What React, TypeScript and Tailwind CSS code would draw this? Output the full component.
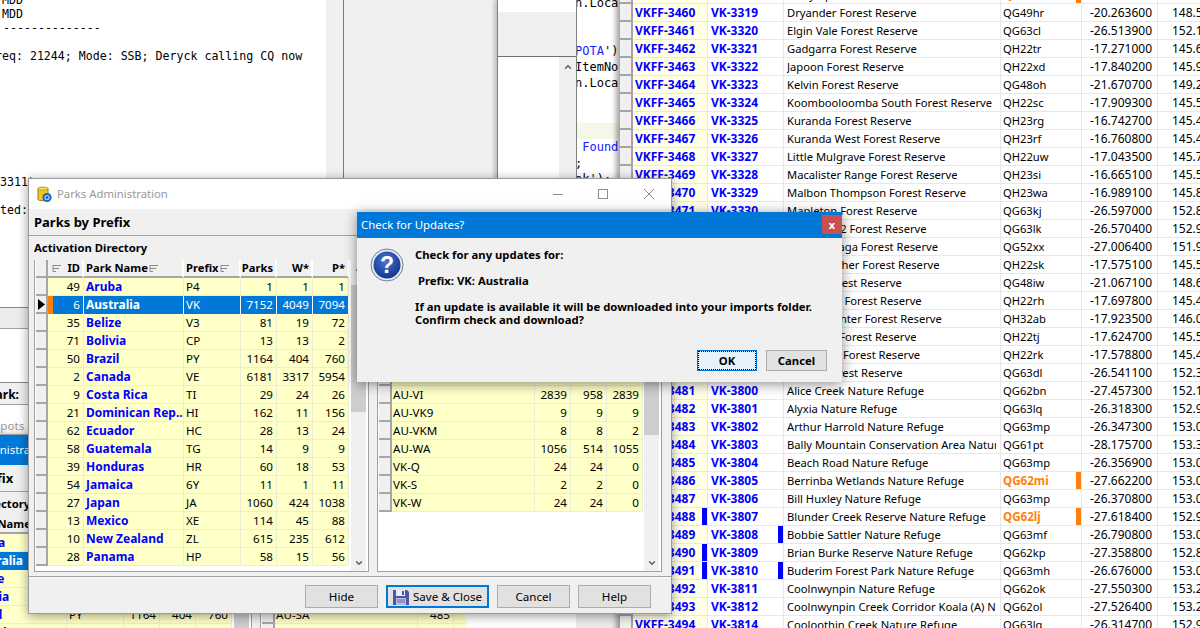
import React from 'react';
import { ChevronDown, ChevronUp } from 'lucide-react';

type ParkRow = [string, string, string, string, string, string];

const PARKS: ParkRow[] = [
  ['49', 'Aruba', 'P4', '1', '1', '1'],
  ['6', 'Australia', 'VK', '7152', '4049', '7094'],
  ['35', 'Belize', 'V3', '81', '19', '72'],
  ['71', 'Bolivia', 'CP', '13', '13', '2'],
  ['50', 'Brazil', 'PY', '1164', '404', '760'],
  ['2', 'Canada', 'VE', '6181', '3317', '5954'],
  ['9', 'Costa Rica', 'TI', '29', '24', '26'],
  ['21', 'Dominican Rep...', 'HI', '162', '11', '156'],
  ['62', 'Ecuador', 'HC', '28', '13', '24'],
  ['58', 'Guatemala', 'TG', '14', '9', '9'],
  ['39', 'Honduras', 'HR', '60', '18', '53'],
  ['54', 'Jamaica', '6Y', '11', '1', '11'],
  ['27', 'Japan', 'JA', '1060', '424', '1038'],
  ['13', 'Mexico', 'XE', '114', '45', '88'],
  ['10', 'New Zealand', 'ZL', '615', '235', '612'],
  ['28', 'Panama', 'HP', '58', '15', '56'],
];

const REGIONS: [string, string, string, string][] = [
  ['AU-ACT', '67', '31', '67'],
  ['AU-NSW', '1212', '702', '1180'],
  ['AU-NT', '94', '60', '94'],
  ['AU-QLD', '1030', '611', '1030'],
  ['AU-SA', '485', '302', '485'],
  ['AU-TA', '385', '215', '385'],
  ['AU-VI', '2839', '958', '2839'],
  ['AU-VK9', '9', '9', '9'],
  ['AU-VKM', '8', '8', '2'],
  ['AU-WA', '1056', '514', '1055'],
  ['VK-Q', '24', '24', '0'],
  ['VK-S', '2', '2', '0'],
  ['VK-W', '24', '24', '0'],
];

// code, wwff, name, grid, lat, lon, flags
type Ref = { a: string; b: string; n: string; g: string; lat: string; lon: string; hot?: boolean; bar1?: boolean; bar2?: boolean };
const r = (a: string, b: string, n: string, g: string, lat: string, lon: string, f: Partial<Ref> = {}): Ref => ({ a, b, n, g, lat, lon, ...f });

const REFS: Ref[] = [
  r('3459', '3318', 'Dalrymple Forest Reserve', 'QH22aa', '-17.950100', '145.2', { hot: true }),
  r('3460', '3319', 'Dryander Forest Reserve', 'QG49hr', '-20.263600', '148.5'),
  r('3461', '3320', 'Elgin Vale Forest Reserve', 'QG63cl', '-26.513900', '152.1'),
  r('3462', '3321', 'Gadgarra Forest Reserve', 'QH22tr', '-17.271000', '145.6'),
  r('3463', '3322', 'Japoon Forest Reserve', 'QH22xd', '-17.840200', '145.9'),
  r('3464', '3323', 'Kelvin Forest Reserve', 'QG48oh', '-21.670700', '149.2'),
  r('3465', '3324', 'Koombooloomba South Forest Reserve', 'QH22sc', '-17.909300', '145.5'),
  r('3466', '3325', 'Kuranda Forest Reserve', 'QH23rg', '-16.742700', '145.4'),
  r('3467', '3326', 'Kuranda West Forest Reserve', 'QH23rf', '-16.760800', '145.4'),
  r('3468', '3327', 'Little Mulgrave Forest Reserve', 'QH22uw', '-17.043500', '145.7'),
  r('3469', '3328', 'Macalister Range Forest Reserve', 'QH23si', '-16.665100', '145.5'),
  r('3470', '3329', 'Malbon Thompson Forest Reserve', 'QH23wa', '-16.989100', '145.8'),
  r('3471', '3330', 'Mapleton Forest Reserve', 'QG63kj', '-26.597000', '152.8'),
  r('3472', '3331', 'Mapleton 2 Forest Reserve', 'QG63lk', '-26.570400', '152.9'),
  r('3473', '3332', 'Mundubbaga Forest Reserve', 'QG52xx', '-27.006400', '151.9'),
  r('3474', '3333', 'Mount Archer Forest Reserve', 'QH22sk', '-17.575100', '145.5'),
  r('3475', '3334', 'Mount Forest Reserve', 'QG48iw', '-21.067100', '148.6'),
  r('3476', '3335', 'Daintree 1 Forest Reserve', 'QH22rh', '-17.697800', '145.4'),
  r('3477', '3336', 'Mount Hunter Forest Reserve', 'QH32ab', '-17.923500', '146.0'),
  r('3478', '3337', 'Tumoulin Forest Reserve', 'QH22tj', '-17.624700', '145.5'),
  r('3479', '3338', 'Wongabel Forest Reserve', 'QH22rk', '-17.578800', '145.4'),
  r('3480', '3339', 'Tinana Forest Reserve', 'QG63dl', '-26.541100', '152.3'),
  r('3481', '3800', 'Alice Creek Nature Refuge', 'QG62bn', '-27.457300', '152.1'),
  r('3482', '3801', 'Alyxia Nature Refuge', 'QG63lq', '-26.318300', '152.9'),
  r('3483', '3802', 'Arthur Harrold Nature Refuge', 'QG63mp', '-26.347300', '153.0'),
  r('3484', '3803', 'Bally Mountain Conservation Area Nature Refuge', 'QG61pt', '-28.175700', '153.3'),
  r('3485', '3804', 'Beach Road Nature Refuge', 'QG63mp', '-26.356900', '153.0'),
  r('3486', '3805', 'Berrinba Wetlands Nature Refuge', 'QG62mi', '-27.662200', '153.0', { hot: true }),
  r('3487', '3806', 'Bill Huxley Nature Refuge', 'QG63mp', '-26.370800', '153.0'),
  r('3488', '3807', 'Blunder Creek Reserve Nature Refuge', 'QG62lj', '-27.618400', '152.9', { hot: true, bar1: true }),
  r('3489', '3808', 'Bobbie Sattler Nature Refuge', 'QG63mf', '-26.790800', '153.0', { bar2: true }),
  r('3490', '3809', 'Brian Burke Reserve Nature Refuge', 'QG62kp', '-27.358800', '152.8', { bar1: true }),
  r('3491', '3810', 'Buderim Forest Park Nature Refuge', 'QG63mh', '-26.676000', '153.0', { bar1: true, bar2: true }),
  r('3492', '3811', 'Coolnwynpin Nature Refuge', 'QG62ok', '-27.550300', '153.2'),
  r('3493', '3812', 'Coolnwynpin Creek Corridor Koala (A) Nature Refuge', 'QG62ol', '-27.526400', '153.2'),
  r('3494', '3814', 'Cooloothin Creek Nature Refuge', 'QG63lq', '-26.314700', '152.9'),
];

const FilterIcon = () => (
  <svg width="10" height="8" viewBox="0 0 10 8" className="shrink-0" fill="none" stroke="#8a8a8a">
    <path d="M1 1.5h8M1 4.5h6M1 7.5h3" />
    <path d="M1 1v6.5" />
  </svg>
);

const RowHead = ({ arrow = false, w = 'w-[12px]' }: { arrow?: boolean; w?: string }) => (
  <div className={`${w} h-full shrink-0 bg-[#f0f0f0] border-r-2 border-b-2 border-[#a5a5a5] flex items-center justify-center`}>
    {arrow && (
      <svg width="7" height="11" viewBox="0 0 7 11">
        <path d="M0 0l7 5.5L0 11z" fill="#000" />
      </svg>
    )}
  </div>
);

const ScrollBar = ({ top, h }: { top: string; h: string }) => (
  <div className="w-[15px] shrink-0 ml-auto mr-[2px] bg-[#f0f0f0] flex flex-col items-center">
    <div className="h-[17px] flex items-center shrink-0">
      <ChevronUp size={10} strokeWidth={3.5} color="#606060" />
    </div>
    <div className={`${top} ${h} w-full bg-[#cdcdcd] shrink-0`} />
    <div className="mt-auto h-[17px] flex items-center shrink-0">
      <ChevronDown size={10} strokeWidth={3.5} color="#606060" />
    </div>
  </div>
);

const HeadCell = ({ children, className }: { children?: React.ReactNode; className: string }) => (
  <div className={`h-full shrink-0 flex items-center font-bold text-[11.2px] border-r-2 border-b-2 border-r-white border-b-[#a5a5a5] ${className}`}>{children}</div>
);

const ParksGrid = () => (
  <div className="flex flex-col w-[313px] shrink-0 ml-px">
    <div className="flex h-[18px] bg-[#f0f0f0] shrink-0">
      <HeadCell className="w-[12px] !border-r-[#a5a5a5]" />
      <HeadCell className="w-[36px] pl-[4px] pr-[2px] justify-between">
        <FilterIcon />
        <span>ID</span>
      </HeadCell>
      <HeadCell className="w-[100px] pl-[2px] gap-px">
        <span>Park Name</span>
        <FilterIcon />
      </HeadCell>
      <HeadCell className="w-[57px] pl-[2px] gap-px">
        <span>Prefix</span>
        <FilterIcon />
      </HeadCell>
      <HeadCell className="w-[36px] justify-end pr-[2px]">Parks</HeadCell>
      <HeadCell className="w-[36px] justify-end pr-[2px]">W*</HeadCell>
      <HeadCell className="w-[36px] justify-end pr-[2px]">P*</HeadCell>
    </div>
    {PARKS.map((p, i) => {
      const sel = i === 1;
      return (
        <div key={p[0]} className={`flex h-[18px] shrink-0 ${sel ? 'bg-[#0078d7] text-white' : 'bg-[#ffffc8] text-black'}`}>
          <RowHead arrow={sel} />
          <div className={`w-[36px] flex items-center border-r ${sel ? 'border-white' : 'border-[#ececd8] border-b'}`}>
            {sel && <div className="w-[5px] h-full bg-[#ff7f0e] shrink-0" />}
            <span className="ml-auto pr-[3px]">{p[0]}</span>
          </div>
          <div className={`w-[100px] flex items-center pl-[2px] font-bold text-[12px] whitespace-nowrap overflow-hidden border-r ${sel ? 'border-white text-white' : 'border-[#ececd8] border-b text-[#0000ff]'}`}>{p[1]}</div>
          <div className={`w-[57px] flex items-center pl-[2px] border-r ${sel ? 'border-white' : 'border-[#ececd8] border-b'}`}>{p[2]}</div>
          {[p[3], p[4], p[5]].map((v, j) => (
            <div key={j} className={`w-[36px] flex items-center justify-end pr-[3px] border-r ${sel ? 'border-white' : 'border-[#ececd8] border-b'}`}>{v}</div>
          ))}
        </div>
      );
    })}
  </div>
);

const RegionGrid = () => (
  <div className="flex flex-col w-[264px] shrink-0 ml-px">
    <div className="flex h-[18px] bg-[#f0f0f0] shrink-0">
      <HeadCell className="w-[13px] !border-r-[#a5a5a5]" />
      <HeadCell className="w-[143px] pl-[2px] gap-px">
        <span>Region</span>
        <FilterIcon />
      </HeadCell>
      <HeadCell className="w-[36px] justify-end pr-[2px]">Parks</HeadCell>
      <HeadCell className="w-[36px] justify-end pr-[2px]">W*</HeadCell>
      <HeadCell className="w-[36px] justify-end pr-[2px]">P*</HeadCell>
    </div>
    {REGIONS.map(p => (
      <div key={p[0]} className="flex h-[18px] shrink-0 bg-[#ffffc8]">
        <RowHead w="w-[13px]" />
        <div className="w-[143px] flex items-center pl-px border-r border-b border-[#ececd8]">{p[0]}</div>
        {[p[1], p[2], p[3]].map((v, j) => (
          <div key={j} className="w-[36px] flex items-center justify-end pr-[3px] border-r border-b border-[#ececd8]">{v}</div>
        ))}
      </div>
    ))}
  </div>
);

const WinButton = ({ children, focus = false }: { children: React.ReactNode; focus?: boolean }) => (
  <div
    className={`h-[23px] flex items-center justify-center gap-[4px] ${
      focus ? 'w-[103px] border-2 border-[#0078d7] bg-[#e1e1e1]' : 'w-[73px] border border-[#adadad] bg-[#e1e1e1]'
    }`}
  >
    {children}
  </div>
);

const DbIcon = () => (
  <svg width="15" height="17" viewBox="0 0 15 17">
    <path d="M1 2.5C1 1 11 1 11 2.5V13.5C11 15 1 15 1 13.5Z" fill="#f5c518" stroke="#a07c10" />
    <ellipse cx="6" cy="2.6" rx="5" ry="1.4" fill="#fde97a" stroke="#a07c10" strokeWidth="0.6" />
    <circle cx="10" cy="11.5" r="4.6" fill="#1c66c4" />
    <circle cx="10" cy="11.5" r="2.6" fill="#9ccbf2" />
    <circle cx="10" cy="11.5" r="1.2" fill="#1a4f9c" />
  </svg>
);

const FloppyIcon = () => (
  <svg width="16" height="16" viewBox="0 0 16 16">
    <path d="M0 1h14l2 2v13H0z" fill="#4a56a8" />
    <rect x="3" y="1" width="9" height="6" fill="#e9ecf6" />
    <rect x="9" y="2" width="2" height="4" fill="#4a56a8" />
    <rect x="3" y="9" width="10" height="7" fill="#b7bcdc" />
    <path d="M4 11h8M4 13h8" stroke="#6a70a8" />
  </svg>
);

const ParksWindow = ({ active, className }: { active: boolean; className: string }) => (
  <div className={`w-[644px] h-[436px] flex flex-col bg-[#f0f0f0] border border-[#9a9a9a] shadow-[0_2px_10px_rgba(0,0,0,0.4)] ${className}`}>
    <div className={`h-[30px] shrink-0 flex items-center pl-[8px] text-[11.3px] ${active ? 'bg-[#0078d7] text-white' : 'bg-white text-[#999999]'}`}>
      <DbIcon />
      <span className="ml-[5px]">Parks Administration</span>
      <div className="ml-auto flex items-center">
        <svg width="103" height="12" viewBox="0 0 103 12" fill="none" stroke="#8c8c8c" className="mr-[16px]">
          <path d="M1 6.5h10" />
          <rect x="46.5" y="1.5" width="9" height="9" />
          <path d="M92 1l10 10M102 1L92 11" />
        </svg>
      </div>
    </div>
    <div className="h-[27px] shrink-0 flex items-center pl-[5px] text-[13px] font-bold border-b border-[#a0a0a0]">Parks by Prefix</div>
    <div className="h-[24px] shrink-0 flex items-center pl-[5px] font-bold text-[11.3px]">Activation Directory</div>
    <div className="flex gap-[8px] pl-[5px] h-[312px] shrink-0 text-black">
      <div className="w-[335px] shrink-0 flex bg-white border border-t-0 border-[#a0a0a0] overflow-hidden">
        <ParksGrid />
        <ScrollBar top="mt-[8px]" h="h-[127px]" />
      </div>
      <div className="w-[285px] shrink-0 flex bg-white border border-t-0 border-[#a0a0a0] overflow-hidden">
        <RegionGrid />
        <ScrollBar top="mt-[0px]" h="h-[158px]" />
      </div>
    </div>
    <div className="mt-[4px] border-t border-b border-t-[#a0a0a0] border-b-white h-[2px] shrink-0" />
    <div className="flex justify-end gap-[8px] pt-[7px] pr-[20px] shrink-0">
      <WinButton>Hide</WinButton>
      <WinButton focus>
        <FloppyIcon />
        <span>Save &amp; Close</span>
      </WinButton>
      <WinButton>Cancel</WinButton>
      <WinButton>Help</WinButton>
    </div>
  </div>
);

const CODE: [string, string][] = [
  ['n.Loca', ''],
  ['', ''],
  ['', ''],
  ['', "POTA')"],
  ['ItemNo', ''],
  ['n.Loca', ''],
  ['', ''],
  ['', ''],
  ['', ''],
  ['', ' Found'],
  [';', ''],
  ["ok');", ''],
];

const LOG: [string, string][] = [
  ['MDD', 'ml-[2px]'],
  ['MDD', 'ml-[2px]'],
  ['--------------', 'ml-[3px]'],
  ['', ''],
  ['req: 21244; Mode: SSB; Deryck calling CQ now', '-ml-[5px]'],
  ['', ''], ['', ''], ['', ''], ['', ''], ['', ''], ['', ''], ['', ''], ['', ''],
  ['3311)', ''],
  ['', ''],
  ['ted:', ''],
];

const QuestionIcon = () => (
  <svg width="34" height="34" viewBox="0 0 34 34" className="shrink-0">
    <defs>
      <radialGradient id="qg" cx="45%" cy="35%" r="70%">
        <stop offset="0" stopColor="#4a78d0" />
        <stop offset="1" stopColor="#0c2f8c" />
      </radialGradient>
    </defs>
    <circle cx="17" cy="17" r="16" fill="#e8ecf2" stroke="#6f7d95" />
    <circle cx="17" cy="17" r="13.5" fill="url(#qg)" />
    <text x="17" y="25" textAnchor="middle" fontSize="23" fontWeight="700" fill="#ffffff" fontFamily="Liberation Sans, sans-serif">?</text>
  </svg>
);

export default function App() {
  return (
    <div className="relative w-[1200px] h-[628px] overflow-hidden bg-[#f0f0f0] text-[11.6px] leading-none text-black font-['Noto_Sans',sans-serif]">
      {/* log window */}
      <div className="absolute left-0 top-0 w-[498px] h-[308px] flex bg-[#f0f0f0]">
        <div className="w-[326px] shrink-0 bg-white overflow-hidden font-['DejaVu_Sans_Mono',monospace] text-[11.6px] leading-[14px] whitespace-pre -mt-[7px] h-[315px]">
          {LOG.map((l, i) => (
            <div key={i} className={`h-[14px] ${l[1]}`}>
              {l[0]}
            </div>
          ))}
        </div>
        <div className="w-[17px] shrink-0" />
        <div className="w-px bg-[#7a7a7a] shrink-0" />
      </div>
      <div className="absolute left-0 top-[307px] w-[60px] flex flex-col overflow-hidden">
        <div className="h-px bg-[#8a8a8a]" />
        <div className="h-[20px] bg-[#ececec]" />
        <div className="h-px bg-[#a0a0a0]" />
        <div className="h-[53px] bg-white" />
        <div className="h-px bg-[#8a8a8a]" />
        <div className="h-[21px] bg-[#f0f0f0] font-bold text-[12px] pt-[3px] flex items-center">
          <div className="w-[19px] flex justify-end whitespace-nowrap">Bookmark:</div>
        </div>
        <div className="h-px bg-[#a0a0a0]" />
        <div className="h-[29px] bg-white flex items-end pb-[2px] text-[#999999] whitespace-nowrap">
          <span className="-ml-[6px]">Spots</span>
        </div>
      </div>

      {/* middle pane */}
      <div className="absolute left-[497px] top-0 w-[80px] h-[200px] bg-white border-x border-[#808080] shadow-[-3px_0_4px_rgba(0,0,0,0.2)] flex flex-col">
        <div className="h-[12px] shrink-0" />
        <div className="h-[45px] shrink-0 bg-[#efefef] border-b border-[#707070]" />
        <div className="flex-1 flex justify-end">
          <div className="w-[17px] bg-[#f0f0f0] flex justify-center pt-[5px]">
            <ChevronUp size={10} strokeWidth={3.5} color="#606060" />
          </div>
        </div>
      </div>

      {/* code window */}
      <div className="absolute left-[577px] -top-[5px] w-[43px] h-[240px] bg-white overflow-hidden font-['DejaVu_Sans_Mono',monospace] text-[12px] leading-[16px] whitespace-pre">
        {CODE.map((c, i) => (
          <div key={i} className={`h-[16px] -ml-[2px] ${i === 8 ? 'bg-[#f5f7e8]' : ''}`}>
            {c[0]}
            {c[1] === "POTA')" ? (
              <>
                <span className="text-[#1a1aff]">POTA</span>')
              </>
            ) : (
              <span className="text-[#1a1aff]">{c[1]}</span>
            )}
          </div>
        ))}
      </div>

      {/* window behind the parks dialog */}
      <ParksWindow active className="absolute -left-[89px] top-[434px]" />
      <div className="absolute left-[466px] top-[606px] w-[110px] h-[22px] bg-white" />
      <div className="absolute left-[576px] top-[606px] w-[44px] h-[22px] bg-[#ececec]" />

      {/* reference list */}
      <div className="absolute left-[620px] -top-[14px] w-[580px] bg-white shadow-[-4px_0_5px_rgba(0,0,0,0.35)]">
        {REFS.map(x => (
          <div key={x.a} className="flex h-[18px] whitespace-nowrap">
            <RowHead w="w-[13px]" />
            <div className="w-[75px] shrink-0 flex items-center pl-[2px] font-bold text-[12px] text-[#0000ff] bg-[#ffffe6] border-r border-b border-[#e8e8e8]">
              <span>VKFF-{x.a}</span>
              {x.bar1 && <div className="ml-auto w-[5px] h-full bg-[#0000ff]" />}
            </div>
            <div className="w-[76px] shrink-0 flex items-center pl-[3px] font-bold text-[12px] text-[#0000ff] border-r border-b border-[#e8e8e8]">
              <span>VK-{x.b}</span>
              {x.bar2 && <div className="ml-auto w-[5px] h-full bg-[#0000ff]" />}
            </div>
            <div className="w-[217px] shrink-0 flex items-center pl-[3px] pr-[4px] text-[11.2px] border-r border-b border-[#e8e8e8]">
              <span className="block overflow-hidden leading-[16px]">{x.n}</span>
            </div>
            <div className={`w-[81px] shrink-0 flex items-center pl-[2px] border-r border-b border-[#e8e8e8] ${x.hot ? 'font-bold text-[#ff7f0e]' : 'text-[11.2px]'}`}>
              <span>{x.g}</span>
              {x.hot && <div className="ml-auto w-[5px] h-full bg-[#ff7f0e]" />}
            </div>
            <div className="w-[76px] shrink-0 flex items-center justify-end pr-[5px] text-[12px] border-r border-b border-[#e8e8e8]">{x.lat}</div>
            <div className="flex-1 flex items-center pl-[14px] text-[12px] border-b border-[#e8e8e8]">{x.lon}</div>
          </div>
        ))}
      </div>

      <ParksWindow active={false} className="absolute left-[28px] top-[178px]" />

      {/* update prompt */}
      <div className="absolute left-[357px] top-[212px] w-[485px] h-[170px] flex flex-col bg-[#f0f0f0] shadow-[0_2px_12px_rgba(0,0,0,0.45)]">
        <div className="h-[26px] shrink-0 bg-[#0078d7] flex items-center pl-[4px] text-white text-[11.4px]">
          Check for Updates?
          <div className="ml-auto mb-[1px] w-[20px] h-[19px] bg-[#c75050] flex items-center justify-center text-[11px] font-bold">x</div>
        </div>
        <div className="flex pt-[10px] pl-[13px] gap-[11px] h-[112px] shrink-0 font-bold text-[11.3px] leading-[13px]">
          <QuestionIcon />
          <div className="flex flex-col whitespace-nowrap">
            <div className="h-[13px]">Check for any updates for:</div>
            <div className="h-[13px]" />
            <div className="h-[13px] pl-[3px]">Prefix: VK: Australia</div>
            <div className="h-[13px]" />
            <div className="h-[13px]">If an update is available it will be downloaded into your imports folder.</div>
            <div className="h-[13px]">Confirm check and download?</div>
          </div>
        </div>
        <div className="flex justify-end gap-[9px] pr-[15px] font-bold text-[11.3px]">
          <div className="w-[60px] h-[21px] border border-[#0078d7] bg-[#e5f1fb] flex items-center justify-center outline-1 outline-dotted -outline-offset-2 outline-black">OK</div>
          <div className="w-[61px] h-[21px] border border-[#adadad] bg-[#e1e1e1] flex items-center justify-center">Cancel</div>
        </div>
      </div>
    </div>
  );
}
